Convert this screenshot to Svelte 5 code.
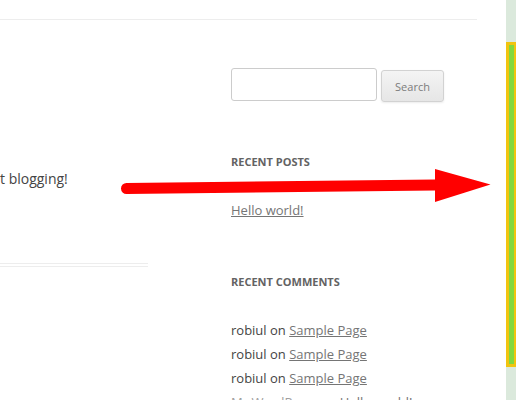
<script>
  const comments = [
    { author: 'robiul', post: 'Sample Page' },
    { author: 'robiul', post: 'Sample Page' },
    { author: 'robiul', post: 'Sample Page' },
    { author: 'Mr WordPress', post: 'Hello world!', linked: true }
  ];
</script>

<div class="site">
  <div class="page">
    <header></header>
    <div class="columns">
      <main>
        <p>t blogging!</p>
        <div class="rule"></div>
      </main>
      <aside>
        <form onsubmit={(e) => e.preventDefault()}>
          <input type="text" aria-label="Search for" />
          <button type="submit">Search</button>
        </form>
        <section>
          <h3>Recent Posts</h3>
          <ul>
            <li><a href="#post">Hello world!</a></li>
          </ul>
        </section>
        <section>
          <h3>Recent Comments</h3>
          <ul>
            {#each comments as c}
              <li>
                {#if c.linked}<a class="author" href="#author">{c.author}</a>{:else}{c.author}{/if}
                on <a href="#comment">{c.post}</a>
              </li>
            {/each}
          </ul>
        </section>
      </aside>
    </div>
  </div>
  <svg class="arrow" width="372" height="36" viewBox="0 0 372 36" aria-hidden="true">
    <path d="M6.500 15 L315 11.500 V1 L370.500 16.500 L315 34 V22.500 L6.500 26 A5.500 5.500 0 0 1 6.500 15 Z" fill="#f00" />
  </svg>
  <div class="marker"></div>
</div>

<style>
  :global(body) {
    margin: 0;
    background: #dbe9dc;
  }
  .site {
    position: relative;
    height: 100vh;
    overflow: hidden;
    font-family: 'Open Sans', sans-serif;
    color: #444;
  }
  .page {
    box-sizing: border-box;
    min-height: 100%;
    margin-right: 10px;
    padding-right: 29px;
    background: #fff;
  }
  header {
    height: 19px;
    border-bottom: 1px solid #ededed;
  }
  .columns {
    display: flex;
    justify-content: space-between;
  }
  main {
    width: 31%;
    padding-top: 147px;
  }
  p {
    margin: 0;
    font-size: 14px;
    line-height: 24px;
  }
  .rule {
    height: 2px;
    margin-top: 72px;
    border: solid #ededed;
    border-width: 1px 0;
  }
  aside {
    width: 246px;
    padding-top: 48px;
    font-size: 13px;
    line-height: 24px;
  }
  form {
    display: flex;
    align-items: flex-end;
    gap: 4px;
    height: 34px;
    margin-bottom: 48px;
  }
  input {
    box-sizing: border-box;
    width: 146px;
    height: 33px;
    margin: 0 0 1px;
    padding: 6px;
    border: 1px solid #ccc;
    border-radius: 3px;
    font: inherit;
  }
  button {
    box-sizing: border-box;
    width: 63px;
    height: 32px;
    padding: 0;
    border: 1px solid #d2d2d2;
    border-radius: 3px;
    background: linear-gradient(#f4f4f4, #e6e6e6);
    box-shadow: 0 1px 2px rgba(64, 64, 64, 0.1);
    color: #7c7c7c;
    font: 11px 'Open Sans', sans-serif;
  }
  section {
    margin-bottom: 48px;
  }
  h3 {
    margin: 0 0 24px;
    font-size: 11px;
    font-weight: 700;
    line-height: 24px;
    text-transform: uppercase;
    color: #636363;
  }
  ul {
    margin: 0;
    padding: 0;
    list-style: none;
  }
  a {
    color: #757575;
  }
  .author {
    color: #9f9f9f;
  }
  .arrow {
    position: absolute;
    top: 168px;
    left: 120px;
  }
  .marker {
    position: absolute;
    top: 42px;
    right: 0;
    box-sizing: border-box;
    width: 10px;
    height: 325px;
    border: solid #f1c40f;
    border-width: 3px 2px 3px 3px;
    background: #82d83f;
  }
</style>
